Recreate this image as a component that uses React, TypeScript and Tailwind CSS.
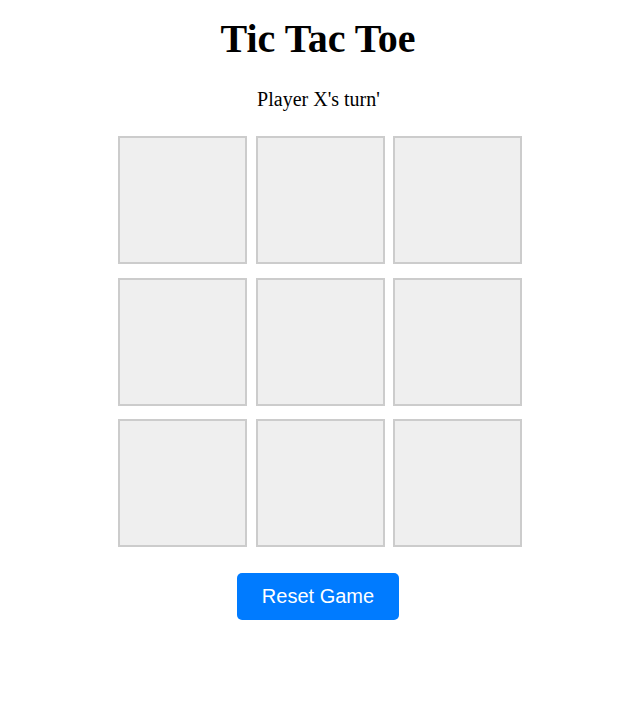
import { useState } from "react";

type Cell = "X" | "O" | null;

export default function App() {
  const [board, setBoard] = useState<Cell[]>(Array(9).fill(null));
  const [xTurn, setXTurn] = useState(true);

  const play = (i: number) => {
    if (board[i]) return;
    const next = [...board];
    next[i] = xTurn ? "X" : "O";
    setBoard(next);
    setXTurn(!xTurn);
  };

  const reset = () => {
    setBoard(Array(9).fill(null));
    setXTurn(true);
  };

  return (
    <div className="flex min-h-[709px] flex-col items-center bg-white font-['Liberation_Serif',serif] text-black">
      <h1 className="mr-[4px] mt-[15px] text-[40px] font-bold leading-[48px]">Tic Tac Toe</h1>
      <p className="mr-[3px] mt-[25px] text-[20px] leading-[23px]">
        Player {xTurn ? "X" : "O"}'s turn'
      </p>
      <div className="mt-[25px] grid grid-cols-[repeat(3,129px)] gap-x-[8.5px] gap-y-[13.6px]">
        {board.map((cell, i) => (
          <button
            key={i}
            onClick={() => play(i)}
            className="h-[128px] w-[129px] border-2 border-[#cccccc] bg-[#efefef] text-[48px] font-bold"
          >
            {cell}
          </button>
        ))}
      </div>
      <button
        onClick={reset}
        className="mr-[4px] mt-[26px] rounded-[5px] bg-[#007bff] px-[25px] py-[12px] font-['Liberation_Sans',Arial,sans-serif] text-[20px] leading-[23px] text-white"
      >
        Reset Game
      </button>
    </div>
  );
}
